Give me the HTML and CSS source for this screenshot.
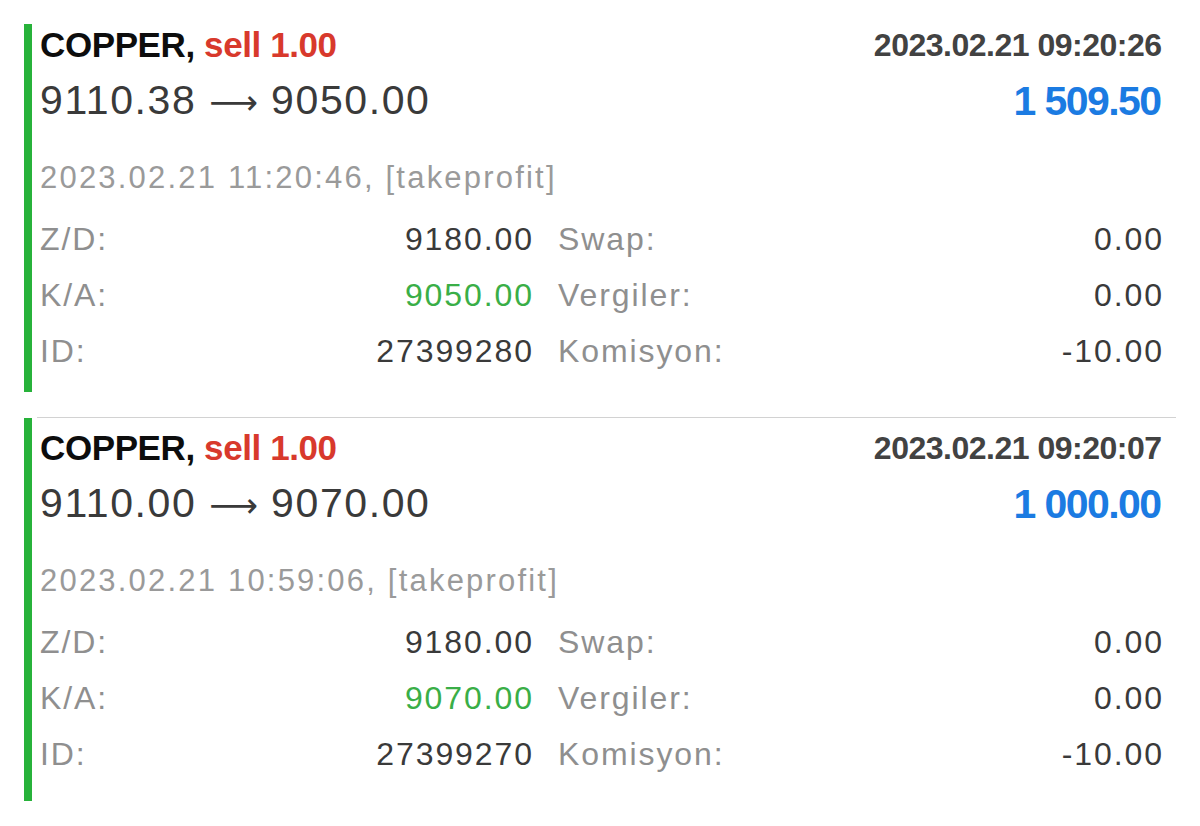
FILE: index.html
```html
<!DOCTYPE html>
<html lang="tr">
<head>
    <meta charset="UTF-8">
    <meta name="viewport" content="width=device-width, initial-scale=1.0">
    <title>History</title>
    <link rel="stylesheet" href="styles.css">
</head>
<body>
    <div class="history">
        <div class="trade">
            <div class="trade-body">
                <div class="head">
                    <span class="symbol">COPPER, <span class="sell">sell 1.00</span></span>
                    <span class="opened">2023.02.21 09:20:26</span>
                </div>
                <div class="prices">
                    <span class="price">9110.38 <span class="arrow">⟶</span> 9050.00</span>
                    <span class="profit">1 509.50</span>
                </div>
                <div class="closed">2023.02.21 11:20:46, [takeprofit]</div>
                <div class="details">
                    <div class="cell"><span class="label">Z/D:</span><span class="value">9180.00</span></div>
                    <div class="cell"><span class="label">Swap:</span><span class="value">0.00</span></div>
                    <div class="cell"><span class="label">K/A:</span><span class="value green">9050.00</span></div>
                    <div class="cell"><span class="label">Vergiler:</span><span class="value">0.00</span></div>
                    <div class="cell"><span class="label">ID:</span><span class="value">27399280</span></div>
                    <div class="cell"><span class="label">Komisyon:</span><span class="value">-10.00</span></div>
                </div>
            </div>
        </div>
        <div class="divider"></div>
        <div class="trade">
            <div class="trade-body">
                <div class="head">
                    <span class="symbol">COPPER, <span class="sell">sell 1.00</span></span>
                    <span class="opened">2023.02.21 09:20:07</span>
                </div>
                <div class="prices">
                    <span class="price">9110.00 <span class="arrow">⟶</span> 9070.00</span>
                    <span class="profit">1 000.00</span>
                </div>
                <div class="closed">2023.02.21 10:59:06, [takeprofit]</div>
                <div class="details">
                    <div class="cell"><span class="label">Z/D:</span><span class="value">9180.00</span></div>
                    <div class="cell"><span class="label">Swap:</span><span class="value">0.00</span></div>
                    <div class="cell"><span class="label">K/A:</span><span class="value green">9070.00</span></div>
                    <div class="cell"><span class="label">Vergiler:</span><span class="value">0.00</span></div>
                    <div class="cell"><span class="label">ID:</span><span class="value">27399270</span></div>
                    <div class="cell"><span class="label">Komisyon:</span><span class="value">-10.00</span></div>
                </div>
            </div>
        </div>
    </div>
</body>
</html>
```

FILE: styles.css
```css
body {
    margin: 0;
    padding: 0;
    background: #fff;
    font-family: "Liberation Sans", Arial, sans-serif;
    color: #3a3a3a;
}
.history {
    padding-top: 24px;
}
.trade {
    padding-bottom: 25px;
}
.trade-body {
    margin: 0 38px 0 24px;
    border-left: 8px solid #27b23a;
    padding: 9px 0 19px 8px;
}
.trade:first-child .trade-body {
    padding-top: 0;
    padding-bottom: 13px;
}
.divider {
    height: 1px;
    margin: 0 24px 0 37px;
    background: #d2d2d2;
}
.head, .prices {
    display: flex;
    justify-content: space-between;
    align-items: center;
}
.head {
    height: 42px;
    line-height: 42px;
}
.symbol {
    font-size: 35px;
    font-weight: bold;
    letter-spacing: -0.4px;
    color: #0d0d0d;
}
.sell {
    color: #d8392c;
}
.opened {
    font-size: 32px;
    font-weight: bold;
    letter-spacing: -0.5px;
    margin-right: 0.5px;
    color: #424242;
}
.prices {
    height: 70px;
    line-height: 70px;
}
.price {
    font-size: 41px;
    letter-spacing: 1.6px;
    color: #3a3a3a;
}
.arrow {
    font-family: "DejaVu Sans", sans-serif;
    font-size: 34px;
    letter-spacing: 0;
}
.profit {
    font-size: 41px;
    font-weight: bold;
    letter-spacing: -1.6px;
    margin-right: 1.6px;
    color: #1b7be2;
}
.closed {
    margin-top: 14px;
    line-height: 56px;
    font-size: 31px;
    letter-spacing: 2.2px;
    color: #9a9a9a;
}
.details {
    margin-top: 5px;
    display: grid;
    grid-template-columns: 492px 1fr;
    column-gap: 26px;
}
.cell {
    display: flex;
    justify-content: space-between;
    line-height: 56px;
    font-size: 32px;
    letter-spacing: 1.9px;
}
.label {
    color: #8f8f8f;
}
.value {
    color: #3a3a3a;
    margin-right: -1.9px;
}
.value.green {
    color: #3aae47;
}
```
